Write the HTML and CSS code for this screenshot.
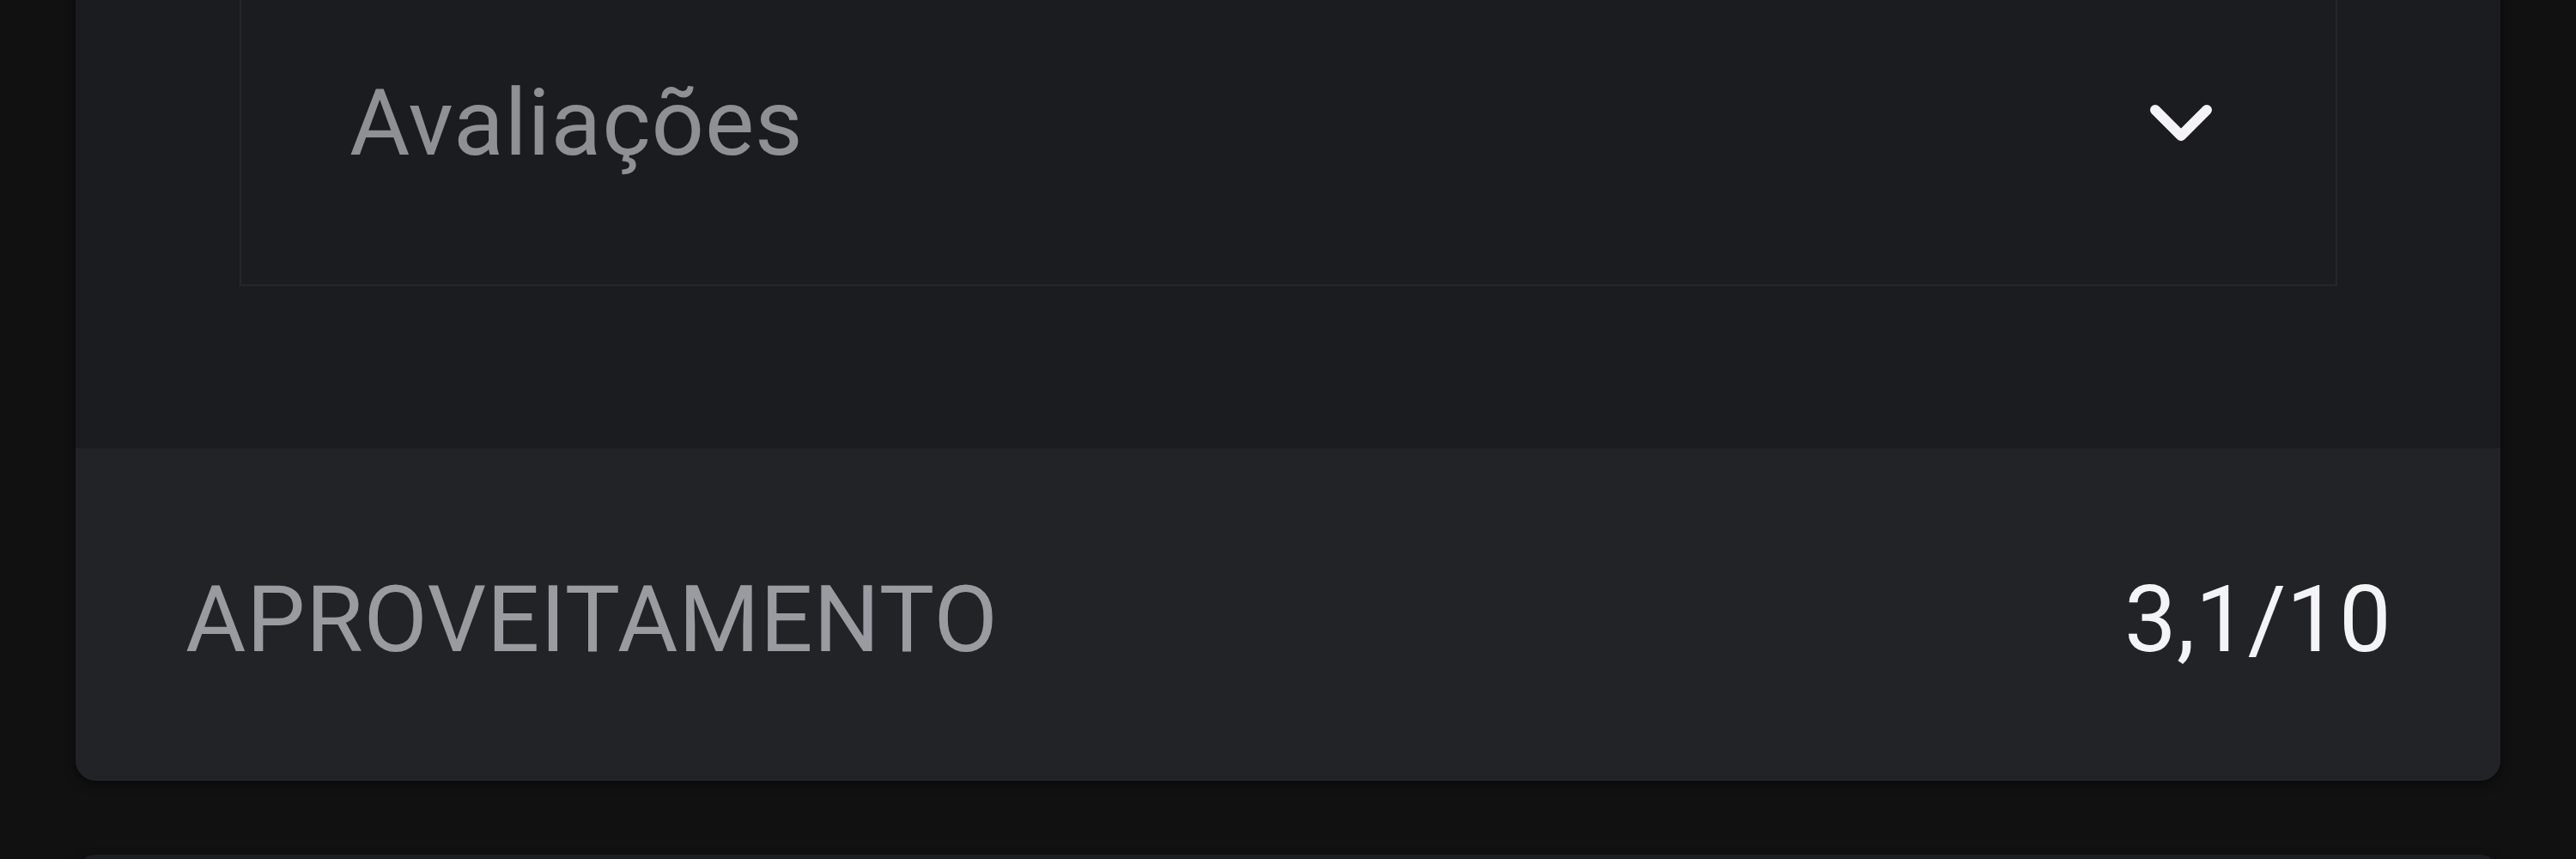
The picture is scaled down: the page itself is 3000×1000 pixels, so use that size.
FILE: index.html
```html
<!DOCTYPE html>
<html lang="pt-BR">
<head>
    <meta charset="UTF-8">
    <meta name="viewport" content="width=device-width, initial-scale=1.0">
    <title>Aproveitamento</title>
    <link rel="stylesheet" href="styles.css">
</head>
<body>
    <div class="page">
        <section class="card">
            <div class="card-body">
                <div class="select">
                    <span class="select-label">Avaliações</span>
                    <svg class="select-icon" viewBox="0 0 72 42" width="72" height="42">
                        <polyline points="6,6 36,36 66,6" fill="none" stroke="#f4f4f6" stroke-width="12" stroke-linecap="round" stroke-linejoin="round"/>
                    </svg>
                </div>
            </div>
            <div class="card-footer">
                <span class="footer-label">APROVEITAMENTO</span>
                <span class="footer-value">3,1/10</span>
            </div>
        </section>
        <section class="card card-next"></section>
    </div>
</body>
</html>
```

FILE: styles.css
```css
body {
    margin: 0;
    padding: 0;
    background: #111111;
    font-family: Roboto, "Liberation Sans", sans-serif;
    overflow: hidden;
}

.page {
    padding: 0 88px;
    margin-top: -236px;
}

.card {
    background: #1b1c20;
    border-radius: 24px;
    box-shadow: 0 4px 12px rgba(0, 0, 0, 0.5);
    overflow: hidden;
}

.card-body {
    padding: 189px 190px 189px 191px;
}

.select {
    height: 380px;
    box-sizing: border-box;
    border: 2px solid #26272b;
    display: flex;
    align-items: center;
    justify-content: space-between;
    padding: 0 144px 0 126px;
}

.select-label {
    font-size: 108px;
    letter-spacing: 0.8px;
    color: #8f9093;
}

.select-icon {
    display: block;
    flex-shrink: 0;
}

.card-footer {
    height: 387px;
    box-sizing: border-box;
    background: #222327;
    display: flex;
    align-items: center;
    justify-content: space-between;
    padding: 10px 127px 0 128px;
}

.footer-label {
    font-size: 108px;
    letter-spacing: 0.8px;
    color: #9a9ba1;
}

.footer-value {
    font-size: 108px;
    letter-spacing: 0.4px;
    color: #f4f4f6;
}

.card-next {
    margin-top: 86px;
    height: 200px;
    background: #1e1f23;
}
```
